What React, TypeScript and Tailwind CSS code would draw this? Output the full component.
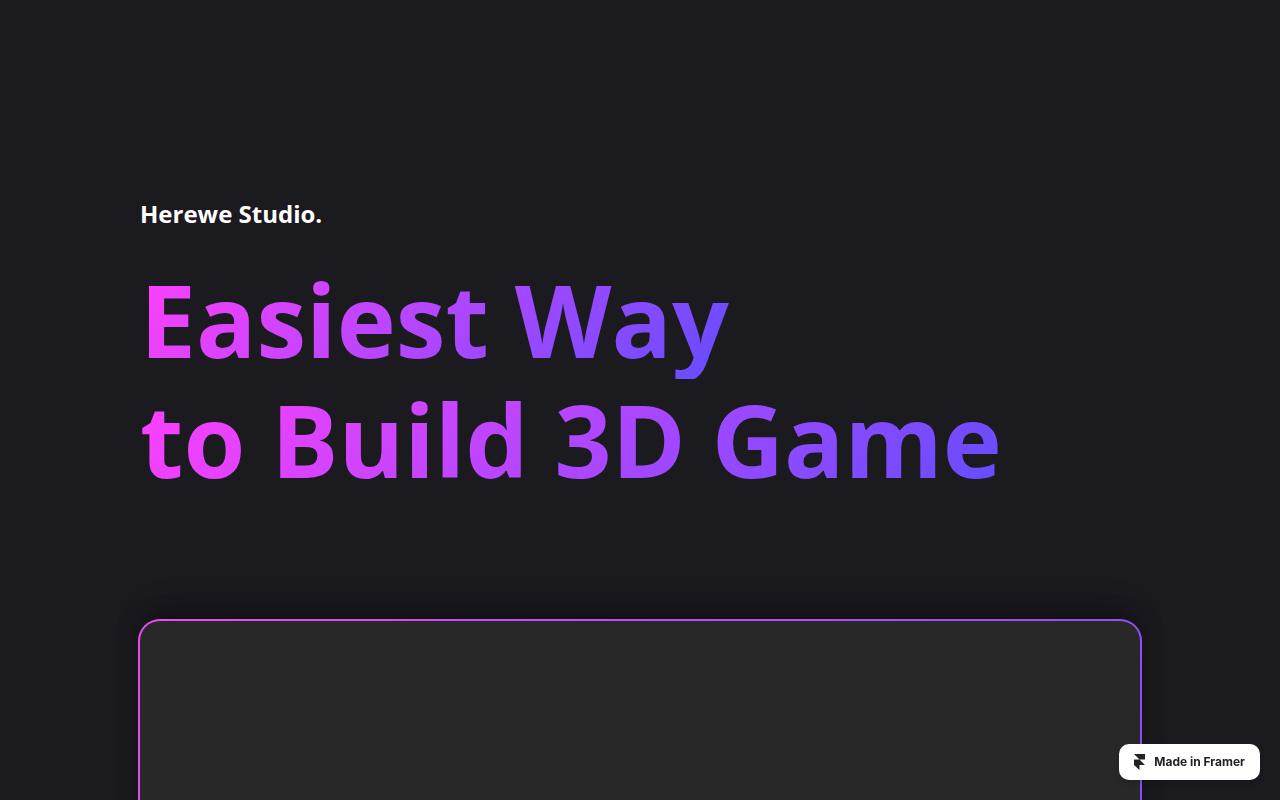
import React from 'react';

const FramerMark: React.FC = () => (
  <svg width="12" height="16" viewBox="0 0 12 16" fill="currentColor" aria-hidden="true">
    <path d="M0 0h11v5.5H5.5L0 0ZM0 5.5h5.5L11 11H5.5v5L0 11V5.5Z" />
  </svg>
);

const App: React.FC = () => {
  return (
    <div className="h-screen overflow-hidden bg-[#1b1a1f] font-['Open_Sans',sans-serif]">
      <main className="mx-auto w-full max-w-[1004px] pt-[198px]">
        <header className="px-0.5">
          <p className="text-2xl leading-8 font-bold text-white">Herewe Studio.</p>
          <h1 className="mt-[29px] flex flex-col items-start text-[100px] leading-[120px] font-bold">
            <span className="bg-linear-[131deg] from-[#ff40ff] to-[#644dff] bg-clip-text text-transparent">
              Easiest Way
            </span>
            <span className="bg-linear-[131deg] from-[#ff40ff] to-[#644dff] bg-clip-text text-transparent">
              to Build 3D Game
            </span>
          </h1>
        </header>

        {/* Preview panel */}
        <section className="mt-[120px] rounded-[22px] bg-linear-[131deg] from-[#e64fe8] to-[#644dff] p-0.5 shadow-[0_-20px_30px_-10px_rgba(0,0,0,0.3),0_0_24px_rgba(0,0,0,0.25)]">
          <div className="h-[600px] rounded-[20px] bg-[#282828]" />
        </section>
      </main>

      <a
        href="https://www.framer.com"
        className="fixed right-5 bottom-5 flex h-9 items-center gap-2 rounded-[10px] bg-white px-[15px] font-['Inter',sans-serif] text-xs font-bold text-[#222222] shadow-md"
      >
        <FramerMark />
        Made in Framer
      </a>
    </div>
  );
};

export default App;
